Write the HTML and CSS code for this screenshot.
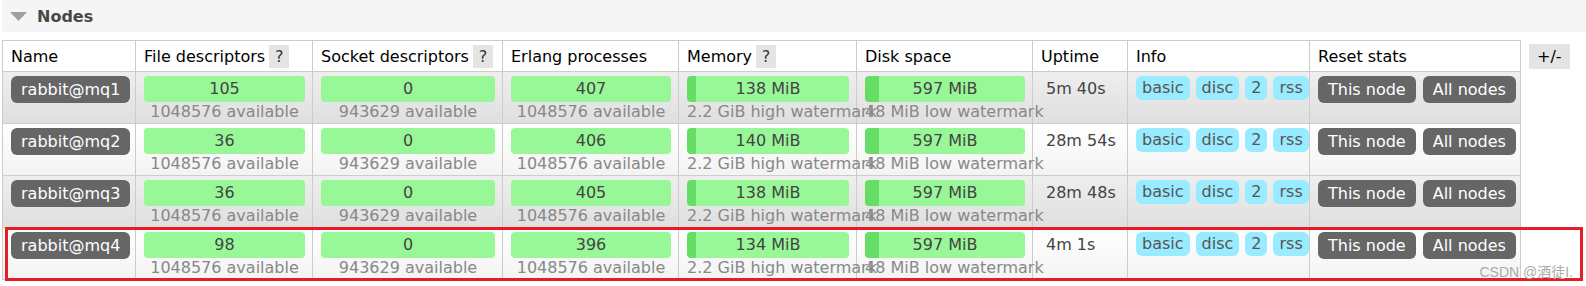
FILE: index.html
```html
<!DOCTYPE html>
<html>
<head>
    <title>Nodes</title>
    <link rel="stylesheet" href="styles.css">
</head>
<body>
    <div class="page">
        <h2 class="section-title">
            <svg class="arrow" width="17" height="9" viewBox="0 0 17 9"><polygon points="0,0 17,0 8.5,9" fill="#a0a0a0"/></svg>
            Nodes
        </h2>

        <div class="list-wrap">
            <table class="list">
                <colgroup>
                    <col style="width: 133px">
                    <col style="width: 177px">
                    <col style="width: 190px">
                    <col style="width: 176px">
                    <col style="width: 178px">
                    <col style="width: 176px">
                    <col style="width: 95px">
                    <col style="width: 182px">
                    <col style="width: 211px">
                </colgroup>
                <thead>
                    <tr>
                        <th>Name</th>
                        <th>File descriptors<span class="help">?</span></th>
                        <th>Socket descriptors<span class="help">?</span></th>
                        <th>Erlang processes</th>
                        <th>Memory<span class="help">?</span></th>
                        <th>Disk space</th>
                        <th>Uptime</th>
                        <th>Info</th>
                        <th>Reset stats</th>
                    </tr>
                </thead>
                <tbody>
                    <tr class="alt2">
                        <td><span class="node-name">rabbit@mq1</span></td>
                        <td><div class="bar">105</div><div class="sub">1048576 available</div></td>
                        <td><div class="bar">0</div><div class="sub">943629 available</div></td>
                        <td><div class="bar">407</div><div class="sub">1048576 available</div></td>
                        <td><div class="bar bar-fill" style="--fill: 9px">138 MiB</div><div class="sub">2.2 GiB high watermark</div></td>
                        <td><div class="bar bar-fill" style="--fill: 14px">597 MiB</div><div class="sub">48 MiB low watermark</div></td>
                        <td class="uptime">5m 40s</td>
                        <td><div class="tags"><span class="tag">basic</span><span class="tag">disc</span><span class="tag">2</span><span class="tag">rss</span></div></td>
                        <td><div class="resets"><span class="btn">This node</span><span class="btn">All nodes</span></div></td>
                    </tr>
                    <tr class="alt1">
                        <td><span class="node-name">rabbit@mq2</span></td>
                        <td><div class="bar">36</div><div class="sub">1048576 available</div></td>
                        <td><div class="bar">0</div><div class="sub">943629 available</div></td>
                        <td><div class="bar">406</div><div class="sub">1048576 available</div></td>
                        <td><div class="bar bar-fill" style="--fill: 9px">140 MiB</div><div class="sub">2.2 GiB high watermark</div></td>
                        <td><div class="bar bar-fill" style="--fill: 14px">597 MiB</div><div class="sub">48 MiB low watermark</div></td>
                        <td class="uptime">28m 54s</td>
                        <td><div class="tags"><span class="tag">basic</span><span class="tag">disc</span><span class="tag">2</span><span class="tag">rss</span></div></td>
                        <td><div class="resets"><span class="btn">This node</span><span class="btn">All nodes</span></div></td>
                    </tr>
                    <tr class="alt2">
                        <td><span class="node-name">rabbit@mq3</span></td>
                        <td><div class="bar">36</div><div class="sub">1048576 available</div></td>
                        <td><div class="bar">0</div><div class="sub">943629 available</div></td>
                        <td><div class="bar">405</div><div class="sub">1048576 available</div></td>
                        <td><div class="bar bar-fill" style="--fill: 9px">138 MiB</div><div class="sub">2.2 GiB high watermark</div></td>
                        <td><div class="bar bar-fill" style="--fill: 14px">597 MiB</div><div class="sub">48 MiB low watermark</div></td>
                        <td class="uptime">28m 48s</td>
                        <td><div class="tags"><span class="tag">basic</span><span class="tag">disc</span><span class="tag">2</span><span class="tag">rss</span></div></td>
                        <td><div class="resets"><span class="btn">This node</span><span class="btn">All nodes</span></div></td>
                    </tr>
                    <tr class="alt1">
                        <td><span class="node-name">rabbit@mq4</span></td>
                        <td><div class="bar">98</div><div class="sub">1048576 available</div></td>
                        <td><div class="bar">0</div><div class="sub">943629 available</div></td>
                        <td><div class="bar">396</div><div class="sub">1048576 available</div></td>
                        <td><div class="bar bar-fill" style="--fill: 9px">134 MiB</div><div class="sub">2.2 GiB high watermark</div></td>
                        <td><div class="bar bar-fill" style="--fill: 14px">597 MiB</div><div class="sub">48 MiB low watermark</div></td>
                        <td class="uptime">4m 1s</td>
                        <td><div class="tags"><span class="tag">basic</span><span class="tag">disc</span><span class="tag">2</span><span class="tag">rss</span></div></td>
                        <td><div class="resets"><span class="btn">This node</span><span class="btn">All nodes</span></div></td>
                    </tr>
                </tbody>
            </table>
            <span class="toggle">+/-</span>
        </div>

        <!-- annotation drawn over the last row -->
        <div class="highlight"></div>
        <div class="watermark">CSDN @酒徒I.</div>
    </div>
</body>
</html>
```

FILE: styles.css
```css
body {
    margin: 0;
    font-family: "DejaVu Sans", Verdana, sans-serif;
    font-size: 16px;
    color: #444;
    background: white;
}

.page {
    position: relative;
    padding-left: 2px;
    height: 286px;
}

.section-title {
    margin: 0 0 8px 0;
    height: 32px;
    display: flex;
    align-items: center;
    background: #f5f5f5;
    font-size: 16px;
    font-weight: bold;
    color: #484848;
}

.arrow {
    margin: 1px 10px 0 8px;
}

.list-wrap {
    display: flex;
    align-items: flex-start;
    gap: 8px;
}

.list {
    border-collapse: collapse;
    table-layout: fixed;
    width: 1519px;
    flex-shrink: 0;
}

.list th,
.list td {
    border: 1px solid #ccc;
}

.list th {
    text-align: left;
    font-weight: normal;
    color: #000;
    padding: 4px 8px 3px 8px;
    line-height: 23px;
    height: 23px;
    white-space: nowrap;
    background: white;
}

.help {
    display: inline-block;
    width: 20px;
    height: 23px;
    margin-left: 4px;
    background: #e4e4e4;
    color: #333;
    text-align: center;
    vertical-align: top;
}

.list td {
    vertical-align: top;
    padding: 4px 7px 2px 8px;
    height: 45px;
    text-align: center;
}

.alt1 {
    background: linear-gradient(#ffffff, #f3f3f3);
}

.alt2 {
    background: linear-gradient(#eeeeee, #dfdfdf);
}

.node-name {
    display: inline-block;
    float: left;
    background: #666;
    color: white;
    border-radius: 6px;
    height: 27px;
    line-height: 27px;
    padding: 0 10px;
    white-space: nowrap;
}

.bar {
    height: 26px;
    line-height: 26px;
    background: #98f898;
    border-radius: 4px;
    color: #444;
}

.bar-fill {
    background: linear-gradient(to right, #66de66 var(--fill), #98f898 var(--fill));
}

.sub {
    color: #888;
    line-height: 19px;
    white-space: nowrap;
}

.list td.uptime {
    text-align: left;
    padding-left: 13px;
    line-height: 26px;
    white-space: nowrap;
}

.tags {
    display: flex;
    gap: 6px;
}

.tag {
    background: #99ebff;
    color: #555;
    border-radius: 6px;
    height: 24px;
    line-height: 24px;
    padding: 0 6px;
    white-space: nowrap;
}

.resets {
    display: flex;
    gap: 7px;
}

.btn {
    flex-shrink: 0;
    background: #666;
    color: white;
    border-radius: 6px;
    height: 27px;
    line-height: 27px;
    padding: 0 10px;
    white-space: nowrap;
}

.toggle {
    margin-top: 4px;
    background: #e4e4e4;
    color: #000;
    height: 25px;
    line-height: 25px;
    padding: 0 8px;
}

.highlight {
    position: absolute;
    left: 5px;
    top: 227px;
    width: 1572px;
    height: 48px;
    border: 3px solid #e81c24;
}

.watermark {
    position: absolute;
    right: 13px;
    top: 261px;
    font-family: "Liberation Sans", "Noto Sans CJK SC", sans-serif;
    font-size: 14px;
    color: #aaa;
}
```
